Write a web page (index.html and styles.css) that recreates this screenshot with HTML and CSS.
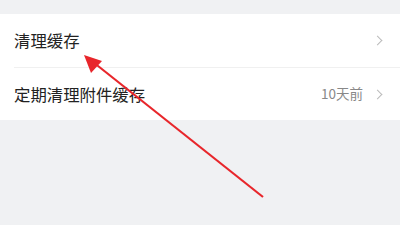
FILE: index.html
```html
<!DOCTYPE html>
<html lang="zh">
<head>
<meta charset="utf-8">
<link rel="stylesheet" href="styles.css">
</head>
<body>
<div class="page">
  <div class="card">
    <div class="row">
      <span class="label">清理缓存</span>
      <span class="right"><span class="chev"></span></span>
    </div>
    <div class="row">
      <span class="label">定期清理附件缓存</span>
      <span class="right"><span class="value">10天前</span><span class="chev"></span></span>
    </div>
  </div>
  <svg class="arrow" width="400" height="225" viewBox="0 0 400 225">
    <line x1="263" y1="197" x2="93" y2="62" stroke="#e8262b" stroke-width="2.2"/>
    <polygon points="84,55 102,61 91,73" fill="#e8262b"/>
  </svg>
</div>
</body>
</html>
```
FILE: styles.css
```css
html, body {
  margin: 0;
  padding: 0;
}
body {
  background: #f0f1f3;
  font-family: "Noto Sans CJK SC", "Liberation Sans", sans-serif;
  width: 400px;
  height: 225px;
  overflow: hidden;
}
.page {
  position: relative;
  width: 400px;
  height: 225px;
  padding-top: 14px;
  box-sizing: border-box;
}
.card {
  background: #fff;
  padding-left: 14px;
}
.row {
  height: 53px;
  display: flex;
  align-items: center;
  justify-content: space-between;
  padding-right: 17px;
  box-sizing: border-box;
}
.row + .row {
  border-top: 1px solid #f0f0f0;
}
.label {
  font-size: 16.4px;
  color: #222;
  line-height: 1;
}
.right {
  display: flex;
  align-items: center;
}
.value {
  font-size: 13.5px;
  color: #888;
  margin-right: 11px;
  line-height: 1;
}
.chev {
  width: 6px;
  height: 6px;
  border-top: 1.3px solid #bbb;
  border-right: 1.3px solid #bbb;
  transform: rotate(45deg);
  margin-right: 2px;
}
.arrow {
  position: absolute;
  left: 0;
  top: 0;
}
```
